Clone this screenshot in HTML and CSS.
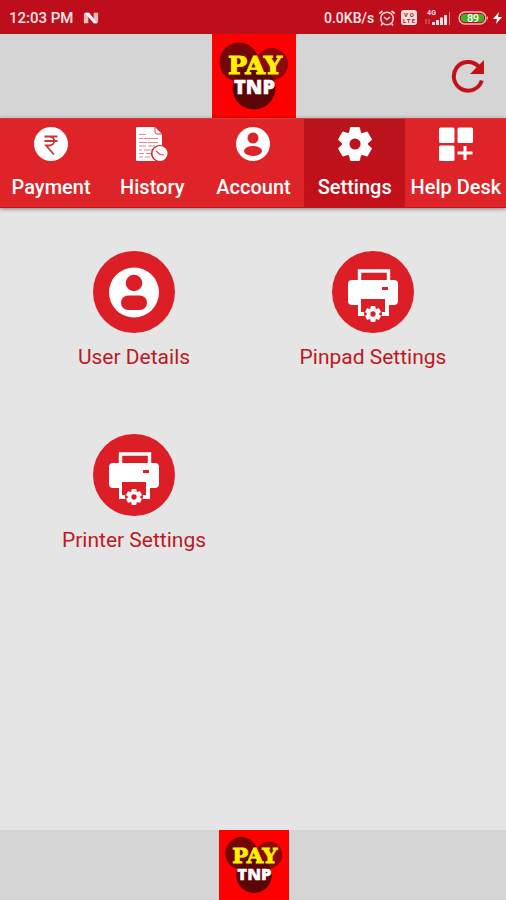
FILE: index.html
```
<!DOCTYPE html>
<html lang="en">
<head>
    <meta charset="UTF-8">
    <meta name="viewport" content="width=device-width, initial-scale=1.0">
    <title>PAY TNP - Settings</title>
    <link rel="stylesheet" href="styles.css">
</head>
<body>
    <!-- Shared icon shapes -->
    <svg class="symbols" width="0" height="0">
        <symbol id="gear" viewBox="-17 -17 34 34">
            <circle r="9.300" fill="none" stroke="#fff" stroke-width="7.400"/>
            <g id="teeth" fill="#fff">
                <path id="tooth" d="M-4 -17h8q.8 0 1 1l1 5h-12l1-5q.2-1 1-1z"/>
                <use href="#tooth" transform="rotate(60)"/>
                <use href="#tooth" transform="rotate(120)"/>
                <use href="#tooth" transform="rotate(180)"/>
                <use href="#tooth" transform="rotate(240)"/>
                <use href="#tooth" transform="rotate(300)"/>
            </g>
        </symbol>
        <symbol id="printer" viewBox="0 0 82 82">
            <circle cx="41" cy="41" r="41" fill="#dc1e26"/>
            <path d="M27.500 32V20h29v12" fill="none" stroke="#fff" stroke-width="3.400"/>
            <path d="M20 29h42q4 0 4 4v17q0 4-4 4h-5v11H26V54h-6q-4 0-4-4V33q0-4 4-4z" fill="#fff"/>
            <path d="M29 48h24v13H29z" fill="#dc1e26"/>
            <path d="M50 36h6v3h-6z" fill="#dc1e26"/>
            <circle cx="41" cy="63" r="9" fill="#dc1e26"/>
            <use href="#gear" x="33" y="55" width="16" height="16"/>
        </symbol>
    </svg>

    <div class="status-bar">
        <span class="time">12:03 PM</span>
        <svg class="n-icon" width="16" height="14" viewBox="0 0 18 14">
            <path d="M1 13V3q0-2 2-2h3v12zM12 13V1h5v10q0 2-2 2z" fill="#f3b9bd"/>
            <path d="M2 1h5l9 12h-4z" fill="#fff"/>
        </svg>
        <div class="status-right">
            <span class="speed">0.0KB/s</span>
            <svg class="alarm" width="18" height="18" viewBox="0 0 18 18" fill="none" stroke="#f7d5d7" stroke-width="1.600">
                <circle cx="9" cy="9.500" r="6.300"/>
                <path d="M6 8l3 2.500L12 8M1.300 4.500L4.500 2M16.700 4.500L13.500 2M4.500 14.500L3 16.500M13.500 14.500l1.500 2"/>
            </svg>
            <svg class="volte" width="16" height="15" viewBox="0 0 16 15">
                <rect width="16" height="15" rx="3" fill="#f8dfe0"/>
                <text x="3" y="7" textLength="10">VO</text>
                <text x="2" y="13" textLength="12">LTE</text>
            </svg>
            <svg class="signal" width="27" height="18" viewBox="0 0 27 18">
                <text x="3" y="6" textLength="9">4G</text>
                <path d="M2 10v5M5 10v5" stroke="#df747a" stroke-width="1"/>
                <path d="M8 16v-3h3v3zM12 16v-5h3v5zM16 16V8.500h3V16zM20 16V6h3v10z" fill="#f8dfe0"/>
                <path d="M25 3h1v13h-1z" fill="#df747a"/>
            </svg>
            <svg class="battery" width="31" height="14" viewBox="0 0 31 14">
                <rect x="1" y="1" width="27" height="12" rx="6" fill="none" stroke="#f0b5b8" stroke-width="1.500"/>
                <rect x="3" y="3" width="23" height="8" rx="3" fill="#43ae1f"/>
                <path d="M29 5q2 2 0 4z" fill="#f0b5b8"/>
                <text x="9" y="11" textLength="12">89</text>
            </svg>
            <svg class="bolt" width="9" height="12" viewBox="0 0 9 12">
                <path d="M6 0L0 7h4l-1 5 6-7H5z" fill="#fff"/>
            </svg>
        </div>
    </div>

    <header class="header">
        <svg class="logo" width="84" height="84" viewBox="0 0 84 84">
            <rect width="84" height="84" fill="#fe0000"/>
            <circle cx="60" cy="30" r="16" fill="#8d0808"/>
            <circle cx="27" cy="28" r="19.500" fill="#740606"/>
            <circle cx="42" cy="54" r="21.500" fill="#5c0505"/>
            <text class="logo-pay" x="16" y="40" textLength="54" lengthAdjust="spacingAndGlyphs">PAY</text>
            <text class="logo-tnp" x="22" y="60" textLength="41" lengthAdjust="spacingAndGlyphs">TNP</text>
        </svg>
        <button class="refresh-btn" aria-label="Refresh">
            <svg width="34" height="34" viewBox="0 0 34 34">
                <path d="M30.800 21.500A14.300 14.300 0 1 1 27.500 7.500" fill="none" stroke="#c4101b" stroke-width="4"/>
                <path d="M33 1v14H19z" fill="#c4101b"/>
            </svg>
        </button>
    </header>

    <nav class="tabs">
        <a class="tab">
            <svg width="34" height="34" viewBox="0 0 34 34">
                <circle cx="17" cy="17" r="17" fill="#fff"/>
                <path d="M10.500 9.500h13M10.500 14h13M11 9.500h4c7 0 7 9 0 9h-3l8 9" fill="none" stroke="#c9353a" stroke-width="1.800"/>
            </svg>
            <span>Payment</span>
        </a>
        <a class="tab">
            <svg width="34" height="34" viewBox="0 0 34 34">
                <path d="M2 0h18l7 7v12a8 8 0 0 0-6 15H2q-1 0-1-1V1q0-1 1-1z" fill="#fff"/>
                <path d="M20 0v5q0 2 2 2h5" fill="none" stroke="#de3d43" stroke-width="1"/>
                <path d="M4 7.500h7M4 11.500h4m1 0h14M4 15.500h8m1 0h10M4 19h7m2 0h7M4 23h3m2 0h8M4 26.500h5m2 0h5M4 30h4m2 0h5" stroke="#e08a8e" stroke-width="1.200"/>
                <circle cx="25" cy="26.500" r="8.500" fill="#de2428"/>
                <circle cx="25" cy="26.500" r="7.500" fill="#fff"/>
                <path d="M21 24l4 3.500 4 .5" fill="none" stroke="#d8454b" stroke-width="1.200"/>
            </svg>
            <span>History</span>
        </a>
        <a class="tab">
            <svg width="34" height="34" viewBox="0 0 34 34">
                <circle cx="17" cy="17" r="17" fill="#fff"/>
                <circle cx="17" cy="11" r="5.500" fill="#de2428"/>
                <ellipse cx="17" cy="24" rx="9" ry="5" fill="#de2428"/>
            </svg>
            <span>Account</span>
        </a>
        <a class="tab active">
            <svg width="34" height="34"><use href="#gear"/></svg>
            <span>Settings</span>
        </a>
        <a class="tab">
            <svg width="34" height="34" viewBox="0 0 34 34" fill="#fff">
                <rect x="0" y="0.500" width="15.500" height="15.500" rx="1.500"/>
                <rect x="18.500" y="0.500" width="15.500" height="15.500" rx="1.500"/>
                <rect x="0" y="18.500" width="15.500" height="15.500" rx="1.500"/>
                <path d="M24.500 19h3v5.500h6v3h-6V33h-3v-5.500h-6v-3h6z"/>
            </svg>
            <span>Help Desk</span>
        </a>
    </nav>

    <main class="menu">
        <a class="menu-item">
            <svg width="82" height="82" viewBox="0 0 82 82">
                <circle cx="41" cy="41" r="41" fill="#dc1e26"/>
                <circle cx="41" cy="41.500" r="25" fill="#fff"/>
                <circle cx="41" cy="32" r="8.300" fill="#dc1e26"/>
                <rect x="28" y="44.500" width="26" height="14.500" rx="7.200" fill="#dc1e26"/>
            </svg>
            <span>User Details</span>
        </a>
        <a class="menu-item">
            <svg width="82" height="82"><use href="#printer"/></svg>
            <span>Pinpad Settings</span>
        </a>
        <a class="menu-item">
            <svg width="82" height="82"><use href="#printer"/></svg>
            <span>Printer Settings</span>
        </a>
    </main>

    <footer class="footer">
        <svg width="70" height="70" viewBox="0 0 84 84">
            <rect width="84" height="84" fill="#fe0000"/>
            <circle cx="60" cy="30" r="16" fill="#8d0808"/>
            <circle cx="27" cy="28" r="19.500" fill="#740606"/>
            <circle cx="42" cy="54" r="21.500" fill="#5c0505"/>
            <text class="logo-pay" x="16" y="40" textLength="54" lengthAdjust="spacingAndGlyphs">PAY</text>
            <text class="logo-tnp" x="22" y="60" textLength="41" lengthAdjust="spacingAndGlyphs">TNP</text>
        </svg>
    </footer>
</body>
</html>
```

FILE: styles.css
```
* {
    box-sizing: border-box;
}

body {
    margin: 0;
    height: 900px;
    display: flex;
    flex-direction: column;
    overflow: hidden;
    background: #e5e5e5;
    font-family: Roboto, sans-serif;
}

svg {
    display: block;
    flex-shrink: 0;
}

.symbols {
    position: absolute;
}

/* Status bar */
.status-bar {
    height: 34px;
    flex-shrink: 0;
    display: flex;
    align-items: center;
    padding: 1px 4px 0 9px;
    background: #be0e1c;
    color: #fbe5e6;
    font-size: 15px;
    font-weight: 500;
}

.time {
    width: 74px;
    white-space: nowrap;
}

.status-right {
    margin-left: auto;
    display: flex;
    align-items: center;
}

.speed {
    width: 54px;
    font-size: 14px;
    white-space: nowrap;
}

.volte {
    margin-left: 5px;
}

.signal {
    margin-left: 7px;
}

.battery {
    margin-left: 7px;
}

.bolt {
    margin-left: 4px;
}

.volte text {
    font-size: 6px;
    font-weight: 700;
    fill: #be0e1c;
}

.signal text {
    font-size: 7px;
    font-weight: 700;
    fill: #f8dfe0;
}

.battery text {
    font-size: 11px;
    font-weight: 500;
    fill: #fff;
}

/* Header */
.header {
    height: 84px;
    flex-shrink: 0;
    display: grid;
    grid-template-columns: 1fr 84px 1fr;
    align-items: center;
    padding-left: 1px;
    background: #d5d5d5;
}

.logo {
    grid-column: 2;
}

.logo-pay {
    font-family: "DejaVu Serif", serif;
    font-size: 25px;
    font-weight: bold;
    fill: #fff200;
    stroke: #fff200;
    stroke-width: 1px;
}

.logo-tnp {
    font-family: "Open Sans", sans-serif;
    font-size: 19px;
    font-weight: 800;
    fill: #fff;
    stroke: #fff;
    stroke-width: 0.5px;
}

.refresh-btn {
    justify-self: end;
    margin-right: 21px;
    padding: 0;
    border: none;
    background: none;
}

/* Tabs */
.tabs {
    height: 90px;
    flex-shrink: 0;
    display: grid;
    grid-template-columns: repeat(5, 1fr);
    background: #de2428;
    border-top: 1px solid #d14043;
    border-bottom: 1px solid #c5141b;
    box-shadow: 0 1px 4px rgba(0, 0, 0, 0.45);
}

.tab {
    min-width: 0;
    display: flex;
    flex-direction: column;
    align-items: center;
    padding-top: 8px;
    padding-left: 1px;
    color: #fff;
    font-size: 20px;
    font-weight: 500;
    line-height: 24px;
    white-space: nowrap;
}

.tab span {
    margin-top: 14px;
}

.tab.active {
    background: linear-gradient(#b9141c, #c4101b);
}

/* Menu */
.menu {
    flex: 1;
    display: grid;
    grid-template-columns: repeat(2, 239px);
    grid-auto-rows: 183px;
    align-content: start;
    justify-content: center;
    padding-top: 43px;
    padding-left: 1px;
}

.menu-item {
    display: flex;
    flex-direction: column;
    align-items: center;
    color: #bd1922;
    font-size: 21px;
    line-height: 26px;
    white-space: nowrap;
}

.menu-item span {
    margin-top: 11px;
}

/* Footer */
.footer {
    height: 70px;
    flex-shrink: 0;
    display: flex;
    justify-content: center;
    padding-left: 1px;
    background: #d5d5d5;
}
```
